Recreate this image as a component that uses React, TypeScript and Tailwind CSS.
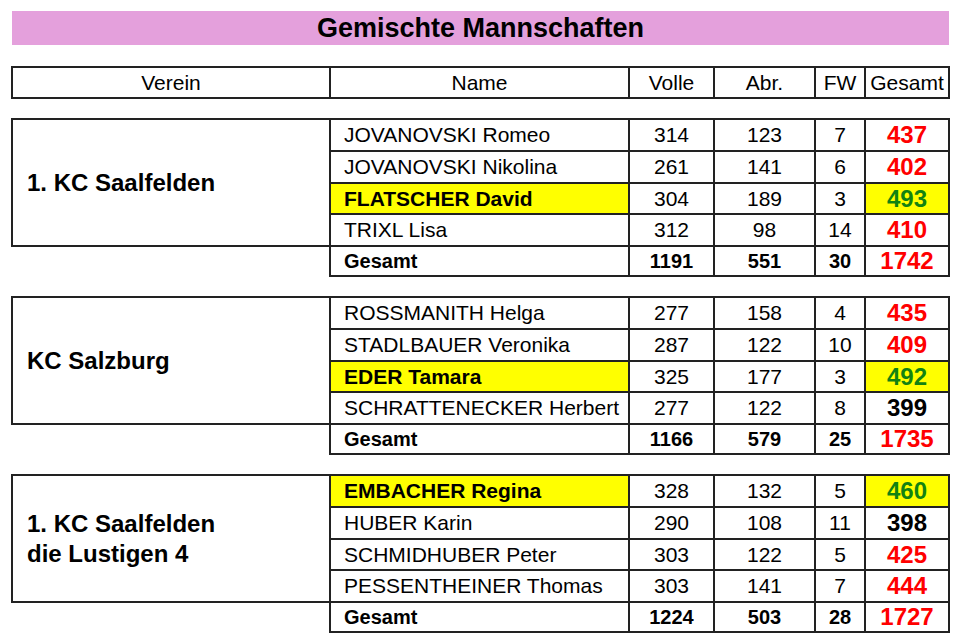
import React from "react";

interface Player {
  name: string;
  volle: number;
  abr: number;
  fw: number;
  total: number;
  best?: boolean;
}

interface Team {
  verein: string[];
  players: Player[];
  volle: number;
  abr: number;
  fw: number;
  total: number;
}

const teams: Team[] = [
  {
    verein: ["1. KC Saalfelden"],
    players: [
      { name: "JOVANOVSKI Romeo", volle: 314, abr: 123, fw: 7, total: 437 },
      { name: "JOVANOVSKI Nikolina", volle: 261, abr: 141, fw: 6, total: 402 },
      { name: "FLATSCHER David", volle: 304, abr: 189, fw: 3, total: 493, best: true },
      { name: "TRIXL Lisa", volle: 312, abr: 98, fw: 14, total: 410 },
    ],
    volle: 1191,
    abr: 551,
    fw: 30,
    total: 1742,
  },
  {
    verein: ["KC Salzburg"],
    players: [
      { name: "ROSSMANITH Helga", volle: 277, abr: 158, fw: 4, total: 435 },
      { name: "STADLBAUER Veronika", volle: 287, abr: 122, fw: 10, total: 409 },
      { name: "EDER Tamara", volle: 325, abr: 177, fw: 3, total: 492, best: true },
      { name: "SCHRATTENECKER Herbert", volle: 277, abr: 122, fw: 8, total: 399 },
    ],
    volle: 1166,
    abr: 579,
    fw: 25,
    total: 1735,
  },
  {
    verein: ["1. KC Saalfelden", "die Lustigen 4"],
    players: [
      { name: "EMBACHER Regina", volle: 328, abr: 132, fw: 5, total: 460, best: true },
      { name: "HUBER Karin", volle: 290, abr: 108, fw: 11, total: 398 },
      { name: "SCHMIDHUBER Peter", volle: 303, abr: 122, fw: 5, total: 425 },
      { name: "PESSENTHEINER Thomas", volle: 303, abr: 141, fw: 7, total: 444 },
    ],
    volle: 1224,
    abr: 503,
    fw: 28,
    total: 1727,
  },
];

const border = "border-l-2 border-t-2 border-[#222] flex items-center shrink-0";
const rowHeights = ["h-[32px]", "h-[32px]", "h-[31px]", "h-[32px]"];

function totalColor(p: Player) {
  if (p.best) return "text-[#128212]";
  return p.total >= 400 ? "text-[#ff0000]" : "text-black";
}

function TeamBlock({ team }: { team: Team }) {
  return (
    <div className="mt-[19px]">
      <div className="flex">
        {/* Verein */}
        <div className={`${border} w-[318px] pl-[14px] text-[24px] font-bold leading-[30px]`}>
          <div>
            {team.verein.map((v) => (
              <div key={v}>{v}</div>
            ))}
          </div>
        </div>

        {/* Spieler */}
        <div className="flex flex-col">
          {team.players.map((p, i) => (
            <div key={p.name} className={`flex ${rowHeights[i]} text-[21px]`}>
              <div
                className={`${border} w-[299px] pl-[13px] ${
                  p.best ? "bg-[#ffff00] font-bold" : ""
                }`}
              >
                {p.name}
              </div>
              <div className={`${border} w-[85px] justify-center`}>{p.volle}</div>
              <div className={`${border} w-[101px] justify-center`}>{p.abr}</div>
              <div className={`${border} w-[50px] justify-center`}>{p.fw}</div>
              <div
                className={`${border} border-r-2 w-[86px] justify-center text-[24px] font-bold ${totalColor(
                  p
                )} ${p.best ? "bg-[#ffff00]" : ""}`}
              >
                {p.total}
              </div>
            </div>
          ))}
        </div>
      </div>

      {/* Gesamt */}
      <div className="flex h-[32px] text-[20px] font-bold">
        <div className="w-[318px] shrink-0 border-t-2 border-[#222]" />
        <div className={`${border} border-b-2 w-[299px] pl-[13px]`}>Gesamt</div>
        <div className={`${border} border-b-2 w-[85px] justify-center`}>{team.volle}</div>
        <div className={`${border} border-b-2 w-[101px] justify-center`}>{team.abr}</div>
        <div className={`${border} border-b-2 w-[50px] justify-center`}>{team.fw}</div>
        <div
          className={`${border} border-b-2 border-r-2 w-[86px] justify-center text-[24px] text-[#ff0000]`}
        >
          {team.total}
        </div>
      </div>
    </div>
  );
}

export default function App() {
  return (
    <div className="min-h-screen bg-white text-black pl-[11px] pt-[11px] font-['Liberation_Sans',Arial,sans-serif]">
      <div className="ml-[1px] w-[937px] h-[34px] bg-[#e4a0dc] flex items-center justify-center text-[27px] font-bold">
        Gemischte Mannschaften
      </div>

      {/* Kopfzeile */}
      <div className="flex h-[33px] mt-[21px] text-[21px]">
        <div className={`${border} border-b-2 w-[318px] justify-center`}>Verein</div>
        <div className={`${border} border-b-2 w-[299px] justify-center`}>Name</div>
        <div className={`${border} border-b-2 w-[85px] justify-center`}>Volle</div>
        <div className={`${border} border-b-2 w-[101px] justify-center`}>Abr.</div>
        <div className={`${border} border-b-2 w-[50px] justify-center`}>FW</div>
        <div className={`${border} border-b-2 border-r-2 w-[86px] justify-center`}>Gesamt</div>
      </div>

      {teams.map((t) => (
        <TeamBlock key={t.verein.join(" ")} team={t} />
      ))}
    </div>
  );
}
